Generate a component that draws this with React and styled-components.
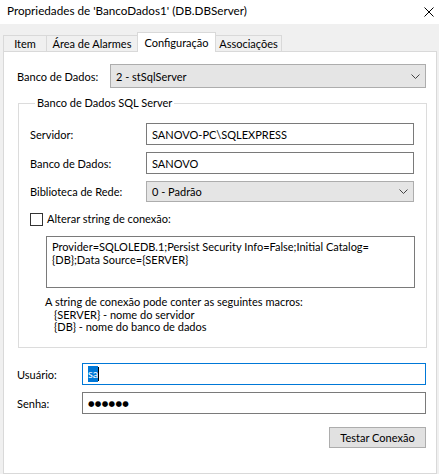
import { createGlobalStyle } from 'styled-components';
import styled from 'styled-components';

const GlobalStyle = createGlobalStyle`
	html, body {
		margin: 0;
		padding: 0;
		background: #f0f0f0;
	}
	body {
		font-family: Lato, "Liberation Sans", sans-serif;
		font-size: 11px;
		color: #000;
	}
`;

const Window = styled.div`
	width: 439px;
	height: 474px;
	overflow: hidden;
	display: flex;
	flex-direction: column;
	background: #f0f0f0;
`;

const TitleBar = styled.div`
	height: 24px;
	flex: none;
	background: #fff;
	display: flex;
	align-items: center;
	justify-content: space-between;
	padding: 0 5px 2px 7px;
	box-sizing: border-box;
	font-size: 11.7px;
	line-height: 1;
`;

const CloseButton = styled.svg`
	width: 10px;
	height: 10px;
	display: block;
	margin-top: 2px;
`;

const Body = styled.div`
	flex: 1;
	display: flex;
	flex-direction: column;
	padding: 8px 2px 0 3px;
`;

const TabStrip = styled.div`
	display: flex;
	align-items: flex-end;
	height: 19px;
	flex: none;
`;

const Tab = styled.div`
	position: relative;
	box-sizing: border-box;
	width: ${(p) => p.$width}px;
	height: ${(p) => (p.$active ? 20 : 16)}px;
	margin-left: ${(p) => (p.$first ? 0 : -1)}px;
	margin-bottom: ${(p) => (p.$active ? -1 : 0)}px;
	border: 1px solid #d9d9d9;
	border-bottom: none;
	background: ${(p) => (p.$active ? '#fff' : '#f0f0f0')};
	z-index: ${(p) => (p.$active ? 2 : 1)};
	display: flex;
	align-items: center;
	justify-content: center;
	white-space: nowrap;
	padding-bottom: ${(p) => (p.$active ? 1 : 0)}px;
`;

const Panel = styled.div`
	width: 434px;
	flex: 1;
	box-sizing: border-box;
	border: 1px solid #d9d9d9;
	background: #fff;
	padding: 12px 10px 0 13px;
	display: flex;
	flex-direction: column;
`;

const Row = styled.div`
	display: flex;
	align-items: center;
	margin-top: ${(p) => p.$gap || 0}px;
`;

const Label = styled.div`
	width: ${(p) => p.$width}px;
	flex: none;
	white-space: nowrap;
`;

const TextBox = styled.div`
	flex: 1;
	box-sizing: border-box;
	height: 22px;
	border: 1px solid ${(p) => (p.$focused ? '#0078d7' : '#7a7a7a')};
	background: #fff;
	padding: 0 4px 0 5px;
	display: flex;
	align-items: center;
	white-space: nowrap;
`;

const Select = styled.div`
	flex: 1;
	box-sizing: border-box;
	height: ${(p) => p.$height}px;
	border: 1px solid #adadad;
	background: #e5e5e5;
	padding: 0 5px 0 5px;
	display: flex;
	align-items: center;
	justify-content: space-between;
	white-space: nowrap;
`;

const Chevron = styled.svg`
	width: 9px;
	height: 5px;
	display: block;
`;

const GroupBox = styled.fieldset`
	margin: 7px -1px 0 1px;
	padding: 0 12px 0 11px;
	border: 1px solid #dcdcdc;
	min-inline-size: 0;
	height: 253px;
	box-sizing: border-box;
`;

const Legend = styled.legend`
	margin-left: 5px;
	padding: 0 2px;
	line-height: 16px;
`;

const GroupBody = styled.div`
	display: flex;
	flex-direction: column;
	padding-top: 12px;
`;

const CheckRow = styled.label`
	display: flex;
	align-items: center;
	gap: 4px;
	margin-top: 10px;
	line-height: 14px;
`;

const CheckBox = styled.span`
	width: 13px;
	height: 13px;
	box-sizing: border-box;
	border: 1px solid #333;
	background: #fff;
	flex: none;
`;

const ConnString = styled.div`
	margin: 10px 0 0 16px;
	width: 369px;
	height: 52px;
	box-sizing: border-box;
	border: 1px solid #7a7a7a;
	padding: 3px 4px 0 5px;
	line-height: 13px;
`;

const Help = styled.div`
	margin: 8px 0 0 15px;
	line-height: 12.5px;
`;

const HelpItem = styled.div`
	padding-left: 9px;
`;

const Selected = styled.span`
	background: #0078d7;
	color: #fff;
	padding: 1px 0;
	line-height: 14px;
`;

const Caret = styled.span`
	width: 1px;
	height: 14px;
	background: #000;
`;

const Dots = styled.span`
	font-family: "DejaVu Sans", sans-serif;
	font-size: 7.5px;
	letter-spacing: 0.3px;
`;

const ButtonRow = styled.div`
	display: flex;
	justify-content: flex-end;
	margin-top: 13px;
`;

const Button = styled.button`
	width: 97px;
	height: 21px;
	box-sizing: border-box;
	border: 1px solid #adadad;
	background: #e1e1e1;
	font: inherit;
	color: #000;
	padding: 0;
`;

const ChevronIcon = () => (
	<Chevron viewBox="0 0 9 5">
		<path d="M0.5 0.5 L4.5 4.5 L8.5 0.5" fill="none" stroke="#444" strokeWidth="1" />
	</Chevron>
);

const tabs = [
	{ label: 'Item', width: 44 },
	{ label: 'Área de Alarmes', width: 92 },
	{ label: 'Configuração', width: 79, active: true },
	{ label: 'Associações', width: 67 },
];

export default function App() {
	return (
		<>
			<GlobalStyle />
			<Window>
				<TitleBar>
					<span>Propriedades de 'BancoDados1' (DB.DBServer)</span>
					<CloseButton viewBox="0 0 10 10">
						<path d="M0.5 0.5 L9.5 9.5 M9.5 0.5 L0.5 9.5" stroke="#000" strokeWidth="1" />
					</CloseButton>
				</TitleBar>
				<Body>
					<TabStrip>
						{tabs.map((t, i) => (
							<Tab key={t.label} $width={t.width} $active={t.active} $first={i === 0}>
								{t.label}
							</Tab>
						))}
					</TabStrip>
					<Panel>
						<Row>
							<Label $width={93}>Banco de Dados:</Label>
							<Select $height={24}>
								<span>2 - stSqlServer</span>
								<ChevronIcon />
							</Select>
						</Row>
						<GroupBox>
							<Legend>Banco de Dados SQL Server</Legend>
							<GroupBody>
								<Row>
									<Label $width={116}>Servidor:</Label>
									<TextBox>SANOVO-PC\SQLEXPRESS</TextBox>
								</Row>
								<Row $gap={7}>
									<Label $width={116}>Banco de Dados:</Label>
									<TextBox>SANOVO</TextBox>
								</Row>
								<Row $gap={7}>
									<Label $width={116}>Biblioteca de Rede:</Label>
									<Select $height={21}>
										<span>0 - Padrão</span>
										<ChevronIcon />
									</Select>
								</Row>
								<CheckRow>
									<CheckBox />
									<span>Alterar string de conexão:</span>
								</CheckRow>
								<ConnString>
									Provider=SQLOLEDB.1;Persist Security Info=False;Initial Catalog=
									<br />
									{'{DB};Data Source={SERVER}'}
								</ConnString>
								<Help>
									<div>A string de conexão pode conter as seguintes macros:</div>
									<HelpItem>{'{SERVER} - nome do servidor'}</HelpItem>
									<HelpItem>{'{DB} - nome do banco de dados'}</HelpItem>
								</Help>
							</GroupBody>
						</GroupBox>
						<Row $gap={15}>
							<Label $width={65}>Usuário:</Label>
							<TextBox $focused>
								<Selected>sa</Selected>
								<Caret />
							</TextBox>
						</Row>
						<Row $gap={7}>
							<Label $width={65}>Senha:</Label>
							<TextBox>
								<Dots>●●●●●●</Dots>
							</TextBox>
						</Row>
						<ButtonRow>
							<Button>Testar Conexão</Button>
						</ButtonRow>
					</Panel>
				</Body>
			</Window>
		</>
	);
}
